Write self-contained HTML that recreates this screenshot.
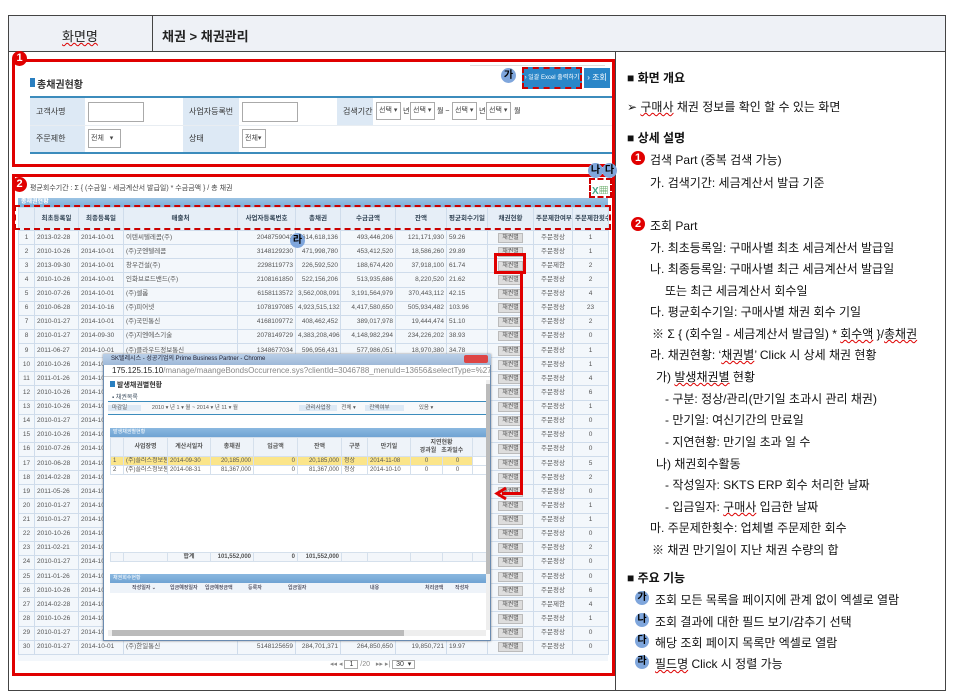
<!DOCTYPE html>
<html><head><meta charset="utf-8">
<style>
*{margin:0;padding:0;box-sizing:border-box}
body{width:954px;height:699px;background:#fff;position:relative;overflow:hidden;font-family:"Liberation Sans","Noto Sans CJK KR",sans-serif;color:#222}
.a{position:absolute}
.frame{left:8px;top:15px;width:938px;height:676px;border:1px solid #444}
.hdr{left:8px;top:15px;width:938px;height:37px;background:#eef1f6;border:1px solid #444}
.red{border:3px solid #e00000}
.circ{position:absolute;width:15px;height:15px;border-radius:50%;background:#e00000;color:#fff;font-size:11px;font-weight:bold;text-align:center;line-height:15px}
.bc{position:absolute;width:15px;height:15px;border-radius:50%;background:#7fa6dc;color:#000;font-size:10px;font-weight:bold;text-align:center;line-height:15px}
.lbl{position:absolute;background:#dde9f5;font-size:8px;color:#333;padding-left:6px}
.inp{position:absolute;border:1px solid #aaa;background:#fff;font-size:7px;color:#444;padding-left:2px}
table.g{position:absolute;border-collapse:collapse;font-size:6.5px;color:#555;table-layout:fixed}
table.g td{border:1px solid #cfdceb;height:14.13px;line-height:12px;white-space:nowrap;overflow:hidden;padding:0 2px}
table.g tr.h td{background:#e6eef7;color:#345;font-weight:bold;text-align:center;height:23px}
.r{text-align:right}.c{text-align:center}
.btn{display:inline-block;background:#ddd;border:1px solid #bbb;padding:0 3px;line-height:8px;font-size:6px}
.rt{position:absolute;font-size:12px;color:#111;white-space:nowrap}
.rt b{font-weight:bold}
.und{text-decoration:underline wavy #d00;text-decoration-thickness:1px}
table.p{position:absolute;border-collapse:collapse;font-size:6px;color:#555;table-layout:fixed}
table.p td{border:1px solid #d5e0ec;height:9px;line-height:7px;padding:0 2px;white-space:nowrap;overflow:hidden}
</style></head><body>
<div class="a frame"></div>
<div class="a hdr"></div>
<div class="a" style="left:152px;top:15px;width:1px;height:37px;background:#444"></div>
<div class="a" style="left:62px;top:26px;font-size:13px;" ><span class="und">화면명</span></div>
<div class="a" style="left:162px;top:26px;font-size:13px;font-weight:bold">채권 &gt; 채권관리</div>
<div class="a" style="left:615px;top:52px;width:1px;height:639px;background:#444"></div>

<!-- Part 1 -->
<div class="a red" style="left:12px;top:59px;width:603px;height:108px"></div>
<div class="circ" style="left:12px;top:51px">1</div>
<div class="a" style="left:30px;top:78px;width:5px;height:9px;background:#2a7fc0"></div>
<div class="a" style="left:37px;top:76px;font-size:10px;font-weight:bold;color:#333">총채권현황</div>
<div class="a" style="left:470px;top:65px;width:135px;height:1px;background:#ddd"></div>
<div class="bc" style="left:501px;top:68px">가</div>
<div class="a" style="left:522px;top:67px;width:60px;height:22px;background:#2a86c8;border:2px dashed #c00;color:#fff;font-size:6px;line-height:18px;text-align:center;white-space:nowrap;overflow:hidden">› 일괄 Excel 출력하기</div>
<div class="a" style="left:584px;top:68px;width:26px;height:20px;background:#2a86c8;color:#fff;font-size:8px;line-height:20px;text-align:center">› 조회</div>
<div class="a" style="left:30px;top:96px;width:582px;height:2px;background:#3c8cbc"></div>
<div class="a" style="left:30px;top:152px;width:582px;height:2px;background:#3c8cbc"></div>
<div class="a" style="left:30px;top:125px;width:582px;height:1px;background:#e8edf2"></div>
<div class="lbl" style="left:30px;top:98px;width:55px;height:27px;line-height:27px">고객사명</div>
<div class="lbl" style="left:30px;top:126px;width:55px;height:26px;line-height:26px">주문제한</div>
<div class="lbl" style="left:183px;top:98px;width:56px;height:27px;line-height:27px">사업자등록번호</div>
<div class="lbl" style="left:183px;top:126px;width:56px;height:26px;line-height:26px">상태</div>
<div class="lbl" style="left:337px;top:98px;width:36px;height:27px;line-height:27px">검색기간</div>
<div class="inp" style="left:88px;top:102px;width:56px;height:20px"></div>
<div class="inp" style="left:242px;top:102px;width:56px;height:20px"></div>
<div class="inp" style="left:88px;top:129px;width:33px;height:19px;line-height:17px">전체 &nbsp; ▾</div>
<div class="inp" style="left:242px;top:129px;width:24px;height:19px;line-height:17px">전체▾</div>
<div class="inp" style="left:376px;top:102px;width:25px;height:18px;line-height:16px">선택 ▾</div>
<div class="a" style="left:403px;top:106px;font-size:7px">년</div>
<div class="inp" style="left:410px;top:102px;width:25px;height:18px;line-height:16px">선택 ▾</div>
<div class="a" style="left:437px;top:106px;font-size:7px">월 ~</div>
<div class="inp" style="left:452px;top:102px;width:25px;height:18px;line-height:16px">선택 ▾</div>
<div class="a" style="left:479px;top:106px;font-size:7px">년</div>
<div class="inp" style="left:486px;top:102px;width:25px;height:18px;line-height:16px">선택 ▾</div>
<div class="a" style="left:514px;top:106px;font-size:7px">월</div>

<!-- Part 2 -->
<div class="a red" style="left:12px;top:174px;width:603px;height:502px"></div>
<div class="circ" style="left:12px;top:177px">2</div>
<div class="bc" style="left:588px;top:163px">나</div>
<div class="bc" style="left:602px;top:163px">다</div>
<div class="a" style="left:589px;top:178px;width:23px;height:20px;border:2px dashed #c00"></div>
<div class="a" style="left:592px;top:182px;font-size:10px;color:#4a8;font-weight:bold">X<span style="color:#6a6">▦</span></div>
<div class="a" style="left:30px;top:183px;font-size:7px;color:#444">평균회수기간 : Σ { (수금일 - 세금계산서 발급일) * 수금금액 } / 총 채권</div>
<div class="a" style="left:18px;top:198px;width:590px;height:9px;background:linear-gradient(#9cc3e4,#7aaed8);color:#fff;font-size:6px;font-weight:bold;padding-left:3px;line-height:9px">총채권현황</div>
<div class="a" style="left:18px;top:207px;width:590px;height:454px;background:#f3f7fb"></div>
<table class="g" style="left:18px;top:207px;width:590px">
<colgroup><col style="width:16px"><col style="width:44px"><col style="width:45px"><col style="width:114px"><col style="width:58px"><col style="width:45px"><col style="width:55px"><col style="width:51px"><col style="width:41px"><col style="width:46px"><col style="width:39px"><col style="width:36px"></colgroup>
<tr class="h"><td></td><td>최초등록일</td><td>최종등록일</td><td>매출처</td><td>사업자등록번호</td><td>총채권</td><td>수금금액</td><td>잔액</td><td>평균회수기일</td><td>채권현황</td><td>주문제한여부</td><td>주문제한횟수</td></tr>
<tr><td class="c">1</td><td>2013-02-28</td><td>2014-10-01</td><td>이텐씨텔레콤(주)</td><td class="r">2048759043</td><td class="r">614,618,136</td><td class="r">493,446,206</td><td class="r">121,171,930</td><td>59.26</td><td class="c"><span class="btn">채권별</span></td><td class="c">주문정상</td><td class="c">1</td></tr>
<tr><td class="c">2</td><td>2010-10-26</td><td>2014-10-01</td><td>(주)굿엔텔레콤</td><td class="r">3148129230</td><td class="r">471,998,780</td><td class="r">453,412,520</td><td class="r">18,586,260</td><td>29.89</td><td class="c"><span class="btn">채권별</span></td><td class="c">주문정상</td><td class="c">1</td></tr>
<tr><td class="c">3</td><td>2013-09-30</td><td>2014-10-01</td><td>창우건설(주)</td><td class="r">2298119773</td><td class="r">226,592,520</td><td class="r">188,674,420</td><td class="r">37,918,100</td><td>61.74</td><td class="c"><span class="btn">채권별</span></td><td class="c">주문제한</td><td class="c">2</td></tr>
<tr><td class="c">4</td><td>2010-10-26</td><td>2014-10-01</td><td>인화브로드밴드(주)</td><td class="r">2108161850</td><td class="r">522,156,206</td><td class="r">513,935,686</td><td class="r">8,220,520</td><td>21.62</td><td class="c"><span class="btn">채권별</span></td><td class="c">주문정상</td><td class="c">2</td></tr>
<tr><td class="c">5</td><td>2010-07-26</td><td>2014-10-01</td><td>(주)셀롬</td><td class="r">6158113572</td><td class="r">3,562,008,091</td><td class="r">3,191,564,979</td><td class="r">370,443,112</td><td>42.15</td><td class="c"><span class="btn">채권별</span></td><td class="c">주문정상</td><td class="c">4</td></tr>
<tr><td class="c">6</td><td>2010-06-28</td><td>2014-10-16</td><td>(주)피어넷</td><td class="r">1078197085</td><td class="r">4,923,515,132</td><td class="r">4,417,580,650</td><td class="r">505,934,482</td><td>103.96</td><td class="c"><span class="btn">채권별</span></td><td class="c">주문정상</td><td class="c">23</td></tr>
<tr><td class="c">7</td><td>2010-01-27</td><td>2014-10-01</td><td>(주)국민통신</td><td class="r">4168109772</td><td class="r">408,462,452</td><td class="r">389,017,978</td><td class="r">19,444,474</td><td>51.10</td><td class="c"><span class="btn">채권별</span></td><td class="c">주문정상</td><td class="c">2</td></tr>
<tr><td class="c">8</td><td>2010-01-27</td><td>2014-09-30</td><td>(주)지엔에스기술</td><td class="r">2078149729</td><td class="r">4,383,208,496</td><td class="r">4,148,982,294</td><td class="r">234,226,202</td><td>38.93</td><td class="c"><span class="btn">채권별</span></td><td class="c">주문정상</td><td class="c">0</td></tr>
<tr><td class="c">9</td><td>2011-06-27</td><td>2014-10-01</td><td>(주)클라우드정보통신</td><td class="r">1348677034</td><td class="r">596,956,431</td><td class="r">577,986,051</td><td class="r">18,970,380</td><td>34.78</td><td class="c"><span class="btn">채권별</span></td><td class="c">주문정상</td><td class="c">1</td></tr>
<tr><td class="c">10</td><td>2010-10-26</td><td>2014-10-01</td><td></td><td></td><td></td><td></td><td></td><td></td><td class="c"><span class="btn">채권별</span></td><td class="c">주문정상</td><td class="c">1</td></tr>
<tr><td class="c">11</td><td>2011-01-26</td><td>2014-10-01</td><td></td><td></td><td></td><td></td><td></td><td></td><td class="c"><span class="btn">채권별</span></td><td class="c">주문정상</td><td class="c">4</td></tr>
<tr><td class="c">12</td><td>2010-10-26</td><td>2014-10-01</td><td></td><td></td><td></td><td></td><td></td><td></td><td class="c"><span class="btn">채권별</span></td><td class="c">주문정상</td><td class="c">6</td></tr>
<tr><td class="c">13</td><td>2010-10-26</td><td>2014-10-01</td><td></td><td></td><td></td><td></td><td></td><td></td><td class="c"><span class="btn">채권별</span></td><td class="c">주문정상</td><td class="c">1</td></tr>
<tr><td class="c">14</td><td>2010-01-27</td><td>2014-10-01</td><td></td><td></td><td></td><td></td><td></td><td></td><td class="c"><span class="btn">채권별</span></td><td class="c">주문정상</td><td class="c">0</td></tr>
<tr><td class="c">15</td><td>2010-10-26</td><td>2014-10-01</td><td></td><td></td><td></td><td></td><td></td><td></td><td class="c"><span class="btn">채권별</span></td><td class="c">주문정상</td><td class="c">0</td></tr>
<tr><td class="c">16</td><td>2010-07-26</td><td>2014-10-01</td><td></td><td></td><td></td><td></td><td></td><td></td><td class="c"><span class="btn">채권별</span></td><td class="c">주문정상</td><td class="c">0</td></tr>
<tr><td class="c">17</td><td>2010-06-28</td><td>2014-10-01</td><td></td><td></td><td></td><td></td><td></td><td></td><td class="c"><span class="btn">채권별</span></td><td class="c">주문정상</td><td class="c">5</td></tr>
<tr><td class="c">18</td><td>2014-02-28</td><td>2014-10-01</td><td></td><td></td><td></td><td></td><td></td><td></td><td class="c"><span class="btn">채권별</span></td><td class="c">주문정상</td><td class="c">2</td></tr>
<tr><td class="c">19</td><td>2011-05-26</td><td>2014-10-01</td><td></td><td></td><td></td><td></td><td></td><td></td><td class="c"><span class="btn">채권별</span></td><td class="c">주문정상</td><td class="c">0</td></tr>
<tr><td class="c">20</td><td>2010-01-27</td><td>2014-10-01</td><td></td><td></td><td></td><td></td><td></td><td></td><td class="c"><span class="btn">채권별</span></td><td class="c">주문정상</td><td class="c">1</td></tr>
<tr><td class="c">21</td><td>2010-01-27</td><td>2014-10-01</td><td></td><td></td><td></td><td></td><td></td><td></td><td class="c"><span class="btn">채권별</span></td><td class="c">주문정상</td><td class="c">1</td></tr>
<tr><td class="c">22</td><td>2010-10-26</td><td>2014-10-01</td><td></td><td></td><td></td><td></td><td></td><td></td><td class="c"><span class="btn">채권별</span></td><td class="c">주문정상</td><td class="c">0</td></tr>
<tr><td class="c">23</td><td>2011-02-21</td><td>2014-10-01</td><td></td><td></td><td></td><td></td><td></td><td></td><td class="c"><span class="btn">채권별</span></td><td class="c">주문정상</td><td class="c">2</td></tr>
<tr><td class="c">24</td><td>2010-01-27</td><td>2014-10-01</td><td></td><td></td><td></td><td></td><td></td><td></td><td class="c"><span class="btn">채권별</span></td><td class="c">주문정상</td><td class="c">0</td></tr>
<tr><td class="c">25</td><td>2011-01-26</td><td>2014-10-01</td><td></td><td></td><td></td><td></td><td></td><td></td><td class="c"><span class="btn">채권별</span></td><td class="c">주문정상</td><td class="c">0</td></tr>
<tr><td class="c">26</td><td>2010-10-26</td><td>2014-10-01</td><td></td><td></td><td></td><td></td><td></td><td></td><td class="c"><span class="btn">채권별</span></td><td class="c">주문정상</td><td class="c">6</td></tr>
<tr><td class="c">27</td><td>2014-02-28</td><td>2014-10-01</td><td></td><td></td><td></td><td></td><td></td><td></td><td class="c"><span class="btn">채권별</span></td><td class="c">주문제한</td><td class="c">4</td></tr>
<tr><td class="c">28</td><td>2010-10-26</td><td>2014-10-01</td><td></td><td></td><td></td><td></td><td></td><td></td><td class="c"><span class="btn">채권별</span></td><td class="c">주문정상</td><td class="c">1</td></tr>
<tr><td class="c">29</td><td>2010-01-27</td><td>2014-10-01</td><td></td><td></td><td></td><td></td><td></td><td></td><td class="c"><span class="btn">채권별</span></td><td class="c">주문정상</td><td class="c">0</td></tr>
<tr><td class="c">30</td><td>2010-01-27</td><td>2014-10-01</td><td>(주)한일통신</td><td class="r">5148125659</td><td class="r">284,701,371</td><td class="r">264,850,650</td><td class="r">19,850,721</td><td>19.97</td><td class="c"><span class="btn">채권별</span></td><td class="c">주문정상</td><td class="c">0</td></tr>
</table>
<div class="a" style="left:14px;top:205px;width:597px;height:25px;border:2px dashed #c00"></div>
<div class="bc" style="left:290px;top:233px">라</div>
<div class="a" style="left:330px;top:660px;font-size:7px;color:#888">◂◂ ◂ <span style="border:1px solid #aaa;padding:0 4px;color:#333">1</span> /20 &nbsp; ▸▸ ▸| <span style="border:1px solid #aaa;padding:0 3px;color:#333">30 &nbsp;▾</span></div>

<!-- red highlight/arrow -->
<div class="a" style="left:494px;top:253px;width:32px;height:21px;border:3px solid #e00000"></div>
<div class="a" style="left:520px;top:274px;width:3px;height:221px;background:#e00000"></div>
<div class="a" style="left:502px;top:492px;width:21px;height:3px;background:#e00000"></div>
<svg class="a" style="left:494px;top:486px" width="14" height="15"><path d="M12 2 L3 7.5 L12 13" fill="none" stroke="#e00000" stroke-width="3"/></svg>

<!-- popup -->
<div class="a" style="left:103px;top:354px;width:388px;height:287px;background:#fff;border:1px solid #6a8bb0;box-shadow:0 0 2px #888"></div>
<div class="a" style="left:103px;top:354px;width:388px;height:11px;background:linear-gradient(#b9cfe8,#9fb9d8);font-size:6px;color:#223;padding-left:8px;line-height:11px">SK텔레시스 - 성공기업의 Prime Business Partner - Chrome</div>
<div class="a" style="left:464px;top:355px;width:24px;height:8px;background:#d44;border-radius:2px"></div>
<div class="a" style="left:104px;top:365px;width:386px;height:12px;background:#fff;border-bottom:1px solid #ccc;font-size:8px;color:#222;padding-left:8px;line-height:12px;white-space:nowrap;overflow:hidden">175.125.15.10<span style="color:#888">/manage/maangeBondsOccurrence.sys?clientId=3046788_menuId=13656&amp;selectType=%27detail</span></div>
<div class="a" style="left:110px;top:381px;width:5px;height:6px;background:#2a7fc0"></div>
<div class="a" style="left:117px;top:380px;font-size:7px;font-weight:bold;color:#333">발생채권별현황</div>
<div class="a" style="left:112px;top:392px;font-size:6px;color:#456">▪ 채권목록</div>
<div class="a" style="left:108px;top:401px;width:378px;height:1px;background:#3c8cbc"></div>
<div class="a" style="left:108px;top:402px;width:378px;height:12px;background:#f7f9fb;font-size:5.5px;color:#555;line-height:12px;white-space:nowrap;overflow:hidden"><span style="background:#dde9f5;padding:0 14px 0 4px">마감일</span> &nbsp;&nbsp;&nbsp;&nbsp;&nbsp; 2010 ▾ 년 1 ▾ 월 ~ 2014 ▾ 년 11 ▾ 월 <span style="margin-left:60px;background:#dde9f5;padding:0 6px">관리사업장</span> &nbsp; 전체 ▾ <span style="margin-left:8px;background:#dde9f5;padding:0 14px 0 4px">잔액여부</span> &nbsp;&nbsp;&nbsp;&nbsp;&nbsp;&nbsp;&nbsp;&nbsp; 있음 ▾</div>
<div class="a" style="left:108px;top:414px;width:378px;height:1px;background:#3c8cbc"></div>
<div class="a" style="left:110px;top:428px;width:376px;height:9px;background:linear-gradient(#8ab8e0,#6fa3d3);font-size:5px;color:#fff;padding-left:3px;line-height:9px">발생채권별현황</div>
<table class="p" style="left:110px;top:437px;width:376px">
<colgroup><col style="width:13px"><col style="width:44px"><col style="width:43px"><col style="width:43px"><col style="width:44px"><col style="width:44px"><col style="width:26px"><col style="width:43px"><col style="width:32px"><col style="width:30px"><col style="width:14px"></colgroup>
<tr style="background:#eef3f9;font-weight:bold;text-align:center"><td></td><td style="height:19px">사업장명</td><td>계산서일자</td><td>총채권</td><td>입금액</td><td>잔액</td><td>구분</td><td>만기일</td><td colspan="2" style="line-height:8px">지연현황<br>경과월 &nbsp; 초과일수</td><td></td></tr>
<tr style="background:#fbe58a"><td>1</td><td>(주)플러스정보통</td><td>2014-09-30</td><td class="r">20,185,000</td><td class="r">0</td><td class="r">20,185,000</td><td>정상</td><td>2014-11-08</td><td class="c">0</td><td class="c">0</td><td style="background:#fff"></td></tr>
<tr><td>2</td><td>(주)플러스정보통</td><td>2014-08-31</td><td class="r">81,367,000</td><td class="r">0</td><td class="r">81,367,000</td><td>정상</td><td>2014-10-10</td><td class="c">0</td><td class="c">0</td><td></td></tr>
</table>
<table class="p" style="left:110px;top:552px;width:376px">
<colgroup><col style="width:13px"><col style="width:44px"><col style="width:43px"><col style="width:43px"><col style="width:44px"><col style="width:44px"><col style="width:26px"><col style="width:43px"><col style="width:32px"><col style="width:30px"><col style="width:14px"></colgroup>
<tr style="background:#f3f6fa;font-weight:bold"><td></td><td></td><td class="c">합계</td><td class="r">101,552,000</td><td class="r">0</td><td class="r">101,552,000</td><td></td><td></td><td></td><td></td><td></td></tr>
</table>
<div class="a" style="left:110px;top:574px;width:376px;height:9px;background:linear-gradient(#8ab8e0,#6fa3d3);font-size:5px;color:#fff;padding-left:3px;line-height:9px">채권회수현황</div>
<div class="a" style="left:110px;top:583px;width:376px;height:10px;background:#eef3f9;font-size:5px;font-weight:bold;color:#556;line-height:10px;white-space:nowrap;overflow:hidden">
<span class="a" style="left:22px">작성일자 ⌄</span><span class="a" style="left:60px">입금예정일자</span><span class="a" style="left:95px">입금예정금액</span><span class="a" style="left:138px">등록자</span><span class="a" style="left:178px">입금일자</span><span class="a" style="left:260px">내용</span><span class="a" style="left:315px">처리금액</span><span class="a" style="left:345px">작성자</span></div>
<div class="a" style="left:486px;top:380px;width:4px;height:250px;background:#eee"></div>
<div class="a" style="left:486px;top:384px;width:4px;height:190px;background:#bbb"></div>
<div class="a" style="left:108px;top:630px;width:378px;height:6px;background:#eee"></div>
<div class="a" style="left:112px;top:630px;width:292px;height:6px;background:#bbb"></div>

<!-- right panel -->
<div class="rt" style="left:627px;top:69px"><b>■ 화면 개요</b></div>
<div class="rt" style="left:627px;top:98px">➢ <span class="und">구매사</span> 채권 정보를 확인 할 수 있는 화면</div>
<div class="rt" style="left:627px;top:129px"><b>■ 상세 설명</b></div>
<div class="circ" style="left:631px;top:151px;width:14px;height:14px;line-height:14px">1</div>
<div class="rt" style="left:650px;top:151px">검색 Part (중복 검색 가능)</div>
<div class="rt" style="left:650px;top:174px">가. 검색기간: 세금계산서 발급 기준</div>
<div class="circ" style="left:631px;top:217px;width:14px;height:14px;line-height:14px">2</div>
<div class="rt" style="left:650px;top:217px">조회 Part</div>
<div class="rt" style="left:650px;top:239px">가. 최초등록일: 구매사별 최초 세금계산서 발급일</div>
<div class="rt" style="left:650px;top:260px">나. 최종등록일: 구매사별 최근 세금계산서 발급일</div>
<div class="rt" style="left:665px;top:282px">또는 최근 세금계산서 회수일</div>
<div class="rt" style="left:650px;top:303px">다. 평균회수기일: 구매사별 채권 회수 기일</div>
<div class="rt" style="left:652px;top:325px">※ Σ { (회수일 - 세금계산서 발급일) * <span class="und">회수액</span> }/<span class="und">총채권</span></div>
<div class="rt" style="left:650px;top:346px">라. 채권현황: ‘<span class="und">채권별</span>’ Click 시 상세 채권 현황</div>
<div class="rt" style="left:656px;top:368px">가) <span class="und">발생채권별</span> 현황</div>
<div class="rt" style="left:665px;top:390px">- 구분: 정상/관리(만기일 초과시 관리 채권)</div>
<div class="rt" style="left:665px;top:411px">- 만기일: 여신기간의 만료일</div>
<div class="rt" style="left:665px;top:433px">- 지연현황: 만기일 초과 일 수</div>
<div class="rt" style="left:656px;top:455px">나) 채권회수활동</div>
<div class="rt" style="left:665px;top:476px">- 작성일자: SKTS ERP 회수 처리한 날짜</div>
<div class="rt" style="left:665px;top:498px">- 입금일자: <span class="und">구매사</span> 입금한 날짜</div>
<div class="rt" style="left:650px;top:519px">마. 주문제한횟수: 업체별 주문제한 회수</div>
<div class="rt" style="left:652px;top:541px">※ 채권 만기일이 지난 채권 수량의 합</div>
<div class="rt" style="left:627px;top:569px"><b>■ 주요 기능</b></div>
<div class="bc" style="left:635px;top:591px;width:14px;height:14px;line-height:14px">가</div>
<div class="rt" style="left:655px;top:591px">조회 모든 목록을 페이지에 관계 없이 엑셀로 열람</div>
<div class="bc" style="left:635px;top:613px;width:14px;height:14px;line-height:14px">나</div>
<div class="rt" style="left:655px;top:613px">조회 결과에 대한 필드 보기/감추기 선택</div>
<div class="bc" style="left:635px;top:634px;width:14px;height:14px;line-height:14px">다</div>
<div class="rt" style="left:655px;top:634px">해당 조회 페이지 목록만 엑셀로 열람</div>
<div class="bc" style="left:635px;top:655px;width:14px;height:14px;line-height:14px">라</div>
<div class="rt" style="left:655px;top:655px"><span class="und">필드명</span> Click 시 정렬 가능</div>
</body></html>
